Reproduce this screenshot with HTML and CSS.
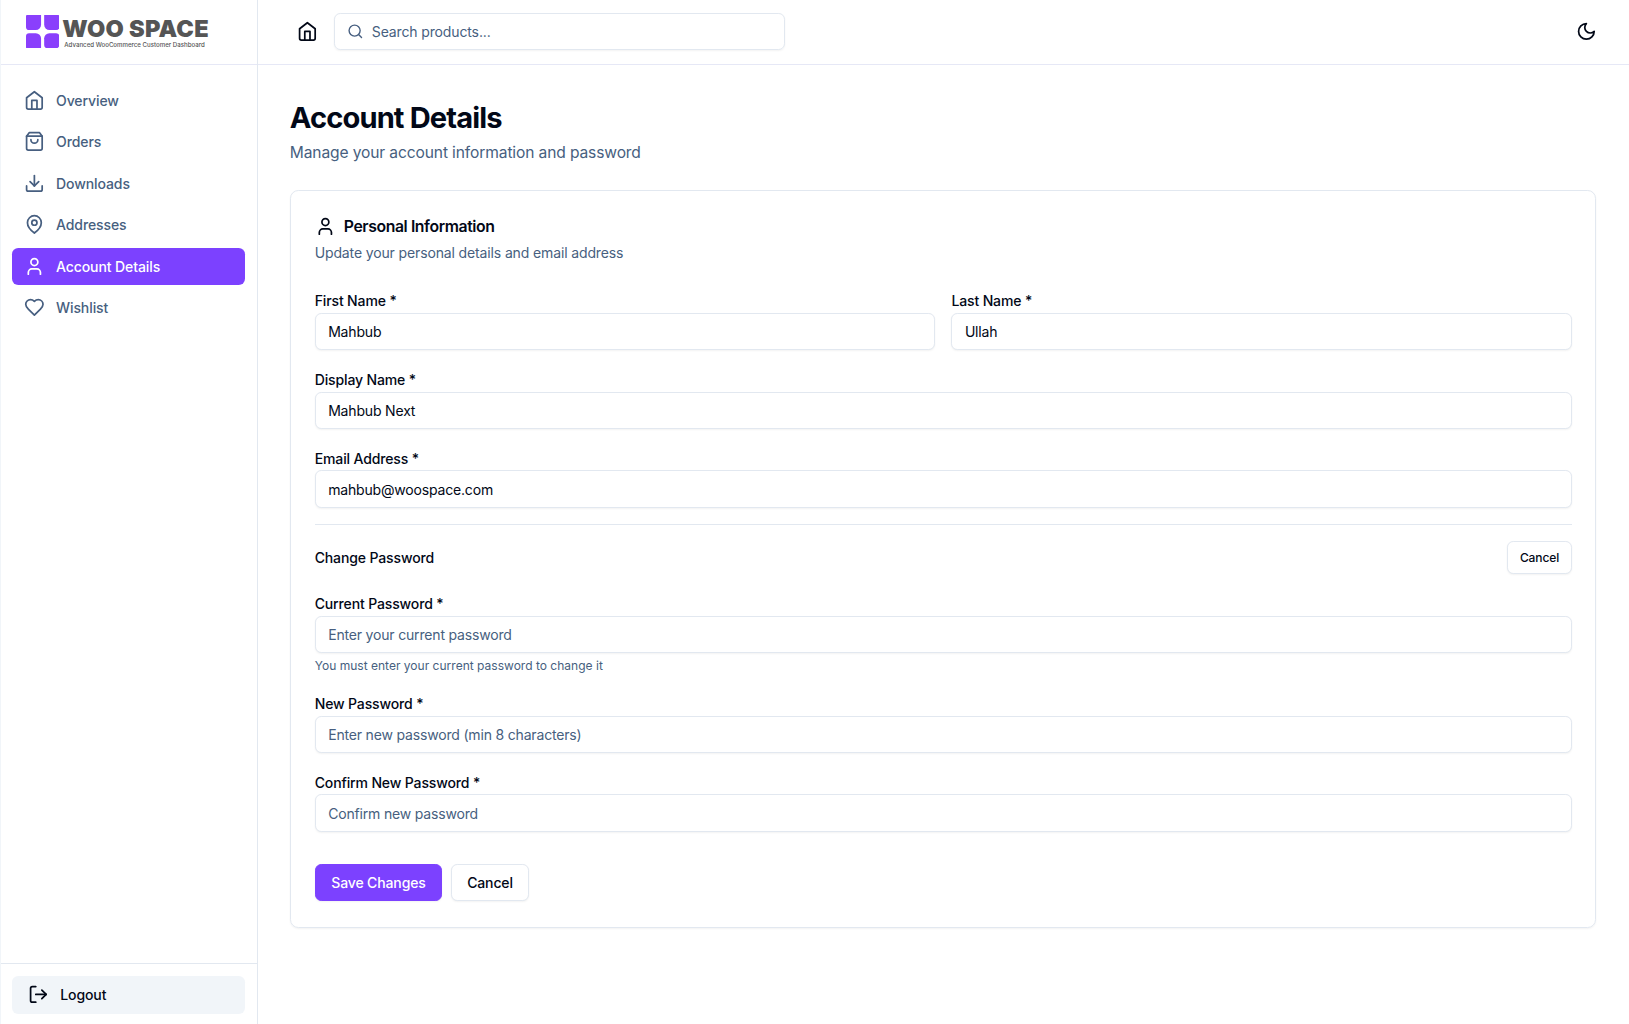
FILE: index.html
```html
<!DOCTYPE html>
<html lang="en">
<head>
<meta charset="utf-8">
<title>Account Details</title>
<link rel="stylesheet" href="styles.css">
</head>
<body>
<svg class="sprite" aria-hidden="true">
  <symbol id="i-home" viewBox="0 0 24 24"><path d="m3 9 9-7 9 7v11a2 2 0 0 1-2 2H5a2 2 0 0 1-2-2z"/><polyline points="9 22 9 12 15 12 15 22"/></symbol>
  <symbol id="i-bag" viewBox="0 0 24 24"><path d="M6 2 3 6v14a2 2 0 0 0 2 2h14a2 2 0 0 0 2-2V6l-3-4Z"/><path d="M3 6h18"/><path d="M16 10a4 4 0 0 1-8 0"/></symbol>
  <symbol id="i-download" viewBox="0 0 24 24"><path d="M21 15v4a2 2 0 0 1-2 2H5a2 2 0 0 1-2-2v-4"/><polyline points="7 10 12 15 17 10"/><line x1="12" y1="15" x2="12" y2="3"/></symbol>
  <symbol id="i-pin" viewBox="0 0 24 24"><path d="M20 10c0 6-8 12-8 12s-8-6-8-12a8 8 0 0 1 16 0Z"/><circle cx="12" cy="10" r="3"/></symbol>
  <symbol id="i-user" viewBox="0 0 24 24"><path d="M19 21v-2a4 4 0 0 0-4-4H9a4 4 0 0 0-4 4v2"/><circle cx="12" cy="7" r="4"/></symbol>
  <symbol id="i-heart" viewBox="0 0 24 24"><path d="M19 14c1.49-1.46 3-3.21 3-5.5A5.5 5.5 0 0 0 16.5 3c-1.76 0-3 .5-4.5 2-1.5-1.5-2.74-2-4.5-2A5.5 5.5 0 0 0 2 8.5c0 2.3 1.5 4.05 3 5.5l7 7Z"/></symbol>
  <symbol id="i-logout" viewBox="0 0 24 24"><path d="M9 21H5a2 2 0 0 1-2-2V5a2 2 0 0 1 2-2h4"/><polyline points="16 17 21 12 16 7"/><line x1="21" y1="12" x2="9" y2="12"/></symbol>
  <symbol id="i-moon" viewBox="0 0 24 24"><path d="M12 3a6 6 0 0 0 9 9 9 9 0 1 1-9-9Z"/></symbol>
  <symbol id="i-search" viewBox="0 0 24 24"><circle cx="11" cy="11" r="8"/><path d="m21 21-4.3-4.3"/></symbol>
</svg>
<div class="app">
  <aside class="sidebar">
    <div class="brand">
      <svg class="brand-mark" viewBox="0 0 32 32" aria-hidden="true">
        <path d="M1 0H14.500V9.500A5 5 0 0 1 9.500 14.500H3A3 3 0 0 1 0 11.500V1A1 1 0 0 1 1 0Z"/>
        <path d="M17.500 0H31A1 1 0 0 1 32 1V11.500A3 3 0 0 1 29 14.500H22.500A5 5 0 0 1 17.500 9.500Z"/>
        <path d="M3 17.500H9.500A5 5 0 0 1 14.500 22.500V32H1A1 1 0 0 1 0 31V20.500A3 3 0 0 1 3 17.500Z"/>
        <path d="M22.500 17.500H29A3 3 0 0 1 32 20.500V29A3 3 0 0 1 29 32H20.500A3 3 0 0 1 17.500 29V22.500A5 5 0 0 1 22.500 17.500Z"/>
      </svg>
      <div class="brand-text">
        <div class="brand-name">WOO SPACE</div>
        <div class="brand-tag">Advanced WooCommerce Customer Dashboard</div>
      </div>
    </div>
    <nav class="nav">
      <a class="nav-item"><svg class="icon"><use href="#i-home"/></svg>Overview</a>
      <a class="nav-item"><svg class="icon"><use href="#i-bag"/></svg>Orders</a>
      <a class="nav-item"><svg class="icon"><use href="#i-download"/></svg>Downloads</a>
      <a class="nav-item"><svg class="icon"><use href="#i-pin"/></svg>Addresses</a>
      <a class="nav-item is-active"><svg class="icon"><use href="#i-user"/></svg>Account Details</a>
      <a class="nav-item"><svg class="icon"><use href="#i-heart"/></svg>Wishlist</a>
    </nav>
    <div class="side-foot">
      <button class="logout" type="button"><svg class="icon"><use href="#i-logout"/></svg>Logout</button>
    </div>
  </aside>
  <div class="content">
    <header class="topbar">
      <button class="icon-btn" type="button" aria-label="Home"><svg class="icon"><use href="#i-home"/></svg></button>
      <label class="search">
        <svg class="icon-sm"><use href="#i-search"/></svg>
        <input class="search-input" type="text" placeholder="Search products...">
      </label>
      <button class="icon-btn theme" type="button" aria-label="Theme"><svg class="icon"><use href="#i-moon"/></svg></button>
    </header>
    <main class="main">
      <h1 class="title">Account Details</h1>
      <p class="subtitle">Manage your account information and password</p>
      <section class="card">
        <div class="card-title"><svg class="icon"><use href="#i-user"/></svg><h2>Personal Information</h2></div>
        <p class="card-sub">Update your personal details and email address</p>
        <form class="form">
          <div class="row-2">
            <div class="field"><label class="label">First Name *</label><input class="input" type="text" value="Mahbub"></div>
            <div class="field"><label class="label">Last Name *</label><input class="input" type="text" value="Ullah"></div>
          </div>
          <div class="field"><label class="label">Display Name *</label><input class="input" type="text" value="Mahbub Next"></div>
          <div class="field"><label class="label">Email Address *</label><input class="input" type="text" value="mahbub@woospace.com"></div>
          <hr class="divider">
          <div class="pw-head"><span class="pw-title">Change Password</span><button class="btn btn-sm" type="button">Cancel</button></div>
          <div class="field"><label class="label">Current Password *</label><input class="input" type="text" placeholder="Enter your current password"><p class="hint">You must enter your current password to change it</p></div>
          <div class="field"><label class="label">New Password *</label><input class="input" type="text" placeholder="Enter new password (min 8 characters)"></div>
          <div class="field"><label class="label">Confirm New Password *</label><input class="input" type="text" placeholder="Confirm new password"></div>
          <div class="actions"><button class="btn btn-primary" type="button">Save Changes</button><button class="btn" type="button">Cancel</button></div>
        </form>
      </section>
    </main>
  </div>
</div>
</body>
</html>
```
FILE: styles.css
```css
html { font-size: 16.62px; }
* { box-sizing: border-box; }
body {
  margin: 0;
  font-family: Inter, "Liberation Sans", sans-serif;
  color: #020817;
  background: #fff;
}
.sprite { display: none; }
.icon, .icon-sm {
  fill: none;
  stroke: currentColor;
  stroke-width: 2;
  stroke-linecap: round;
  stroke-linejoin: round;
  flex: none;
}
.icon { width: 1.25rem; height: 1.25rem; }
.icon-sm { width: 1rem; height: 1rem; }

.app { display: flex; height: 100vh; overflow: hidden; }

.sidebar {
  width: 15.5rem;
  flex: none;
  display: flex;
  flex-direction: column;
  border-right: 1px solid #e2e8f0;
  border-left: 1px solid #f1f5f9;
}
.brand {
  height: 3.9375rem;
  flex: none;
  display: flex;
  align-items: center;
  gap: .1875rem;
  padding-left: 1.5rem;
  border-bottom: 1px solid #e6e8f6;
}
.brand-mark { width: 2rem; height: 2rem; fill: #8a3ffc; flex: none; margin-top: -.0625rem; }
.brand-text { display: flex; flex-direction: column; padding-top: .1875rem; }
.brand-name {
  font-size: 1.42rem;
  line-height: 1.25rem;
  font-weight: 900;
  color: #555555;
  letter-spacing: .01em;
  white-space: nowrap;
}
.brand-tag {
  font-size: .37rem;
  line-height: .5rem;
  margin-top: .0625rem;
  font-weight: 500;
  color: #555555;
  padding-left: .125rem;
  white-space: nowrap;
}
.nav {
  flex: 1;
  display: flex;
  flex-direction: column;
  gap: .25rem;
  padding: .96rem .6875rem 1rem;
}
.nav-item {
  height: 2.25rem;
  display: flex;
  align-items: center;
  gap: .6875rem;
  padding-left: .6875rem;
  border-radius: .375rem;
  font-size: .84375rem;
  letter-spacing: -.007em;
  font-weight: 500;
  color: #475f80;
}
.nav-item.is-active { background: #7c41ff; color: #fff; }
.side-foot { padding: .75rem .6875rem; border-top: 1px solid #e2e8f0; height: 3.6875rem; flex: none; }
.logout {
  width: 100%;
  height: 2.25rem;
  display: flex;
  align-items: center;
  gap: .6875rem;
  padding: 0 0 0 .9375rem;
  border: 0;
  border-radius: .375rem;
  background: #f1f5f9;
  font: 500 .84375rem Inter, "Liberation Sans", sans-serif;
  letter-spacing: -.007em;
  color: #020817;
}

.content { flex: 1; min-width: 0; display: flex; flex-direction: column; }
.topbar {
  height: 3.9375rem;
  flex: none;
  display: flex;
  align-items: center;
  gap: .5rem;
  padding: 0 1.4375rem 1px 1.875rem;
  border-bottom: 1px solid #e6e8f6;
}
.icon-btn {
  width: 2.25rem;
  height: 2.25rem;
  display: flex;
  align-items: center;
  justify-content: center;
  padding: 0;
  border: 0;
  background: none;
  color: #020817;
}
.theme { margin-left: auto; }
.search {
  width: 27.125rem;
  height: 2.25rem;
  display: flex;
  align-items: center;
  gap: .5rem;
  padding-left: .6875rem;
  border: 1px solid #e2e8f0;
  border-radius: .375rem;
  box-shadow: 0 1px 2px rgba(0, 0, 0, .05);
  color: #475f80;
}
.search-input {
  flex: 1;
  min-width: 0;
  border: 0;
  outline: 0;
  padding: 0;
  font: 400 .84375rem Inter, "Liberation Sans", sans-serif;
  letter-spacing: -.01em;
  color: #020817;
  background: none;
}
.search-input::placeholder, .input::placeholder { color: #475f80; opacity: 1; }

.main { flex: 1; padding: 2rem 1.96rem 0 1.9375rem; }
.title {
  margin: 0;
  font-size: 1.75rem;
  line-height: 2.25rem;
  font-weight: 700;
  letter-spacing: -.03em;
  color: #020817;
}
.subtitle {
  margin: .3125rem 0 0;
  font-size: .9375rem;
  line-height: 1.5rem;
  letter-spacing: -.008em;
  color: #475f80;
}
.card {
  margin-top: 1.4375rem;
  padding: 1.5rem 1.4375rem 1.5625rem;
  border: 1px solid #e2e8f0;
  border-radius: .5rem;
  box-shadow: 0 1px 2px rgba(0, 0, 0, .05);
}
.card-title { display: flex; align-items: center; gap: .5rem; height: 1.25rem; }
.card-title h2 {
  margin: .0625rem 0 0;
  font-size: .95rem;
  line-height: 1.25rem;
  font-weight: 600;
  letter-spacing: -.025em;
}
.card-sub {
  margin: .375rem 0 0;
  font-size: .84375rem;
  letter-spacing: -.01em;
  line-height: 1.25rem;
  color: #475f80;
}
.form { margin-top: 1.625rem; display: flex; flex-direction: column; gap: 1.1875rem; }
.row-2 { display: grid; grid-template-columns: 1fr 1fr; gap: 1rem; }
.field { display: flex; flex-direction: column; gap: .0625rem; }
.label { font-size: .84375rem; letter-spacing: -.01em; line-height: 1.25rem; font-weight: 500; }
.input {
  width: 100%;
  height: 2.25rem;
  padding: 0 .75rem;
  border: 1px solid #e2e8f0;
  border-radius: .375rem;
  box-shadow: 0 1px 2px rgba(0, 0, 0, .05);
  outline: 0;
  background: #fff;
  font: 400 .84375rem Inter, "Liberation Sans", sans-serif;
  letter-spacing: -.013em;
  color: #020817;
}
.hint { margin: .25rem 0 -.0625rem; font-size: .725rem; line-height: 1rem; color: #475f80; }
.divider { width: 100%; margin: -.1875rem 0 0; border: 0; border-top: 1px solid #e2e8f0; }
.pw-head { display: flex; align-items: center; justify-content: space-between; margin-top: -.25rem; }
.pw-title { font-size: .84375rem; letter-spacing: -.01em; font-weight: 500; }
.btn {
  height: 2.25rem;
  padding: 0 .9375rem;
  border: 1px solid #e2e8f0;
  border-radius: .375rem;
  background: #fff;
  box-shadow: 0 1px 2px rgba(0, 0, 0, .05);
  font: 500 .84375rem Inter, "Liberation Sans", sans-serif;
  letter-spacing: -.01em;
  color: #020817;
}
.btn-sm { height: 2rem; padding: 0 .6875rem; font-size: .725rem; }
.btn-primary { background: #7c41ff; border-color: #7c41ff; color: #fff; }
.actions { display: flex; gap: .5rem; margin-top: .75rem; }
```
